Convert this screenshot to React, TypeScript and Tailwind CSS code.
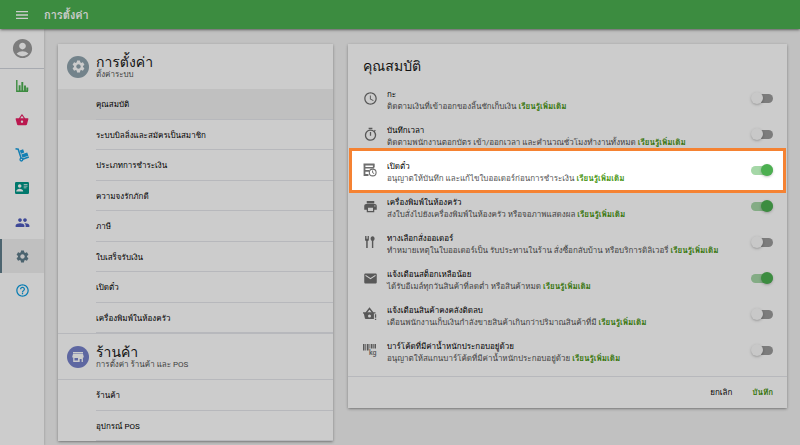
import { useState } from 'react'
import type { ReactNode } from 'react'
import clsx from 'clsx'
import {
  MdAccountCircle,
  MdAccessTime,
  MdEmail,
  MdHelpOutline,
  MdMenu,
  MdOutlineTimer,
  MdPeople,
  MdPrint,
  MdSettings,
  MdShoppingBasket,
} from 'react-icons/md'

const ChartIcon = () => (
  <svg width="14" height="14" viewBox="0 0 14 14" fill="none" stroke="currentColor">
    <path d="M1.8 1v11.2H13" strokeWidth="1.4" />
    <path d="M4.6 12V6.2M7.3 12V3M10 12V6.6M12.3 12V8.6" strokeWidth="1.9" />
  </svg>
)

const TrolleyIcon = () => (
  <svg width="15" height="15" viewBox="0 0 15 15" fill="currentColor">
    <path
      d="M.5 1.7l2.7.5 3 9.3M7.6 12.2l6.2-2.2"
      fill="none"
      stroke="currentColor"
      strokeWidth="1.5"
    />
    <path d="M4.8 3.4l3.3-1.2 1.2 3.4-3.3 1.2zM6.3 7.4l5.9-2 1.2 3.4-5.9 2z" />
    <circle cx="6.4" cy="12.6" r="1.4" fill="none" stroke="currentColor" strokeWidth="1.3" />
  </svg>
)

const CardIcon = () => (
  <svg width="14" height="12" viewBox="0 0 14 12">
    <rect width="14" height="12" rx="1.2" fill="currentColor" />
    <g fill="white">
      <circle cx="4.7" cy="4" r="1.8" />
      <path d="M1.2 9.5c0-2 2-2.8 3.5-2.8s3.5.8 3.5 2.8z" />
      <path d="M8.7 2.2h3.8v.8H8.7zM8.7 3.8h3.8v.8H8.7zM8.7 5.4h2.8v.8H8.7z" />
    </g>
  </svg>
)

const StoreIcon = () => (
  <svg width="12" height="12" viewBox="0 0 12 12" fill="currentColor">
    <path d="M1 1h10v1.4H1zM1 2.9h10l.7 2.6v1h-.8V11H9.6V8H7.7v3H1.2V6.5H.3v-1zM2.5 7v2.4H6V7z" fillRule="evenodd" />
  </svg>
)

const TicketIcon = () => (
  <svg width="14" height="14" viewBox="0 0 14 14" fill="none" stroke="currentColor">
    <path d="M.5 1.5h11M1.5 1v12M1 12h4.5M10.8 1v3.6" strokeWidth="1.8" />
    <path d="M2 4.7h9M2 7.9h4" strokeWidth="1.6" />
    <circle cx="9.7" cy="9.5" r="3.4" strokeWidth="1.1" />
    <path d="M9.6 7.5v2.2l1.6.9" />
  </svg>
)

const CutleryIcon = () => (
  <svg width="14" height="14" viewBox="0 0 14 14" fill="currentColor">
    <path d="M2 1h.9v2.7h.6V1h.9v2.7H5V1h.9v3.4c0 .9-.5 1.4-1.2 1.6V13H3.2V6C2.5 5.8 2 5.3 2 4.4z" />
    <path d="M9.6 1.2c1.2 0 2 1.1 2 2.4 0 1.2-.5 2-1.3 2.3V13H8.9V5.9c-.8-.3-1.3-1.1-1.3-2.3 0-1.3.8-2.4 2-2.4z" />
  </svg>
)

const StockAlertIcon = () => (
  <svg width="14" height="14" viewBox="0 0 14 14">
    <path d="M3 6l3.5-4.5L10 6" fill="none" stroke="currentColor" strokeWidth="1.4" />
    <path
      d="M0 5.2h12.5v1.3h-1.6V12H3.2c-.8 0-1.2-.3-1.4-1L.9 6.8 0 6.5zM6.5 7.5a1.5 1.5 0 100 3 1.5 1.5 0 000-3z"
      fill="currentColor"
      fillRule="evenodd"
    />
    <path d="M11.9 7.2h1.3v3.6h-1.3zM11.9 11.7h1.3V13h-1.3z" fill="currentColor" />
  </svg>
)

const BarcodeIcon = () => (
  <svg width="14" height="14" viewBox="0 0 14 14">
    <path
      d="M0 1h1.5v6.5H0zM2.3 1h.8v6.5h-.8zM3.9 1h1.7v6.5H3.9zM6.5 1h.8v4.5h-.8zM8 1h1.5v4.5H8zM10.2 1h.7v4.5h-.7zM11.5 1H13v4.5h-1.5z"
      fill="currentColor"
    />
    <text x="6" y="12" fontSize="7" fontWeight="500" fontFamily="Roboto, sans-serif" fill="currentColor">
      kg
    </text>
  </svg>
)

const navItems = [
  { label: 'รายงาน', icon: <ChartIcon />, color: 'text-[#4caf50]' },
  { label: 'สินค้า', icon: <MdShoppingBasket size={14} />, color: 'text-[#e91e63]' },
  { label: 'คลังสินค้า', icon: <TrolleyIcon />, color: 'text-[#1a9fe0]' },
  { label: 'พนักงาน', icon: <CardIcon />, color: 'text-[#009688]' },
  { label: 'ลูกค้า', icon: <MdPeople size={15} />, color: 'text-[#4e5bbd]' },
  { label: 'การตั้งค่า', icon: <MdSettings size={15} />, color: 'text-[#607d8b]', active: true },
  { label: 'ช่วยเหลือ', icon: <MdHelpOutline size={15} />, color: 'text-[#0c9de0]' },
]

const systemItems = [
  'คุณสมบัติ',
  'ระบบบิลลิ่งและสมัครเป็นสมาชิก',
  'ประเภทการชำระเงิน',
  'ความจงรักภักดี',
  'ภาษี',
  'ใบเสร็จรับเงิน',
  'เปิดตั๋ว',
  'เครื่องพิมพ์ในห้องครัว',
]

const storeItems = ['ร้านค้า', 'อุปกรณ์ POS']

type Feature = {
  id: string
  icon: ReactNode
  title: string
  text: string
  on?: boolean
  highlight?: boolean
}

const features: Feature[] = [
  { id: 'shifts', icon: <MdAccessTime size={15} />, title: 'กะ', text: 'ติดตามเงินที่เข้าออกของลิ้นชักเก็บเงิน' },
  {
    id: 'clock',
    icon: <MdOutlineTimer size={15} />,
    title: 'บันทึกเวลา',
    text: 'ติดตามพนักงานตอกบัตร เข้า/ออกเวลา และคำนวณชั่วโมงทำงานทั้งหมด',
  },
  {
    id: 'tickets',
    icon: <TicketIcon />,
    title: 'เปิดตั๋ว',
    text: 'อนุญาตให้บันทึก และแก้ไขใบออเดอร์ก่อนการชำระเงิน',
    on: true,
    highlight: true,
  },
  {
    id: 'printers',
    icon: <MdPrint size={15} />,
    title: 'เครื่องพิมพ์ในห้องครัว',
    text: 'ส่งใบสั่งไปยังเครื่องพิมพ์ในห้องครัว หรือจอภาพแสดงผล',
    on: true,
  },
  {
    id: 'dining',
    icon: <CutleryIcon />,
    title: 'ทางเลือกสั่งออเดอร์',
    text: 'ทำหมายเหตุในใบออเดอร์เป็น รับประทานในร้าน สั่งซื้อกลับบ้าน หรือบริการดิลิเวอรี่',
  },
  {
    id: 'stock',
    icon: <MdEmail size={15} />,
    title: 'แจ้งเตือนสต็อกเหลือน้อย',
    text: 'ได้รับอีเมล์ทุกวันสินค้าที่ลดต่ำ หรือสินค้าหมด',
    on: true,
  },
  {
    id: 'negative',
    icon: <StockAlertIcon />,
    title: 'แจ้งเตือนสินค้าคงคลังติดลบ',
    text: 'เตือนพนักงานเก็บเงินกำลังขายสินค้าเกินกว่าปริมาณสินค้าที่มี',
  },
  {
    id: 'barcodes',
    icon: <BarcodeIcon />,
    title: 'บาร์โค้ดที่มีค่าน้ำหนักประกอบอยู่ด้วย',
    text: 'อนุญาตให้สแกนบาร์โค้ดที่มีค่าน้ำหนักประกอบอยู่ด้วย',
  },
]

function Switch({ id, defaultChecked }: { id: string; defaultChecked?: boolean }) {
  const [checked, setChecked] = useState(!!defaultChecked)
  return (
    <span className="relative flex h-3 w-[22px] shrink-0 items-center">
      <input
        id={id}
        type="checkbox"
        role="switch"
        checked={checked}
        onChange={(e) => setChecked(e.target.checked)}
        className="peer absolute inset-0 z-10 cursor-pointer opacity-0"
      />
      <span className="ml-1 h-[9px] flex-1 rounded-full bg-[#9b9b9b] peer-checked:ml-0 peer-checked:bg-[#a5d7a7]" />
      <span className="absolute left-0 size-3 rounded-full bg-[#fafafa] shadow-sm shadow-black/20 peer-checked:right-0 peer-checked:left-auto peer-checked:bg-[#4caf50]" />
    </span>
  )
}

function SectionHeader({ icon, color, title, text }: { icon: ReactNode; color: string; title: string; text: string }) {
  return (
    <div className="flex h-[45px] items-center gap-[7px] pl-[9px]">
      <div className={clsx('flex size-[22px] items-center justify-center rounded-full text-white', color)}>{icon}</div>
      <div className="flex flex-col">
        <h2 className="text-sm leading-4 text-neutral-900">{title}</h2>
        <p className="text-[8px] leading-[10px] text-neutral-600">{text}</p>
      </div>
    </div>
  )
}

function SettingsList({ items, active }: { items: string[]; active?: string }) {
  return (
    <ul className="flex flex-col">
      {items.map((item) => (
        <li key={item} className={clsx('pl-[38px] odd:h-[31px] even:h-[30px]', item === active && 'bg-[#f0f0f0]')}>
          <a href="#" className="flex h-full items-center border-b border-gray-200 pt-0.5 text-[8px] text-black">
            {item}
          </a>
        </li>
      ))}
    </ul>
  )
}

function FeatureRow({ feature }: { feature: Feature }) {
  return (
    <li className={clsx('relative flex h-9 items-center pr-[14px] pl-[15px]', feature.highlight && 'z-20')}>
      {feature.highlight && (
        <div className="absolute inset-x-px -top-1 -bottom-[5px] border-[3px] border-[#f58232] bg-white" />
      )}
      <div className="relative flex w-6 shrink-0 text-[#6e6e6e]">{feature.icon}</div>
      <div className="relative min-w-0 flex-1 pt-1.5 text-[8px] leading-3 whitespace-nowrap">
        <label htmlFor={feature.id} className="block text-black">
          {feature.title}
        </label>
        <p className="text-neutral-600">
          {feature.text}{' '}
          <a href="#" className="font-semibold text-[#43920a]">
            เรียนรู้เพิ่มเติม
          </a>
        </p>
      </div>
      <Switch id={feature.id} defaultChecked={feature.on} />
    </li>
  )
}

function App() {
  return (
    <div className="relative flex min-h-screen flex-col bg-[#f2f2f2] font-['Roboto','Loma','Waree','Garuda',sans-serif]">
      <header className="relative flex h-[29px] items-center gap-[14px] bg-[#4caf50] pl-[14px] text-white shadow shadow-black/40">
        <button type="button" aria-label="เมนู">
          <MdMenu size={16} />
        </button>
        <h1 className="pt-1 text-[11px] font-bold">การตั้งค่า</h1>
      </header>

      <div className="flex flex-1">
        <nav className="w-11 shrink-0 bg-white shadow shadow-black/20">
          <a href="#" aria-label="บัญชี" className="flex h-10 items-center justify-center border-b border-gray-300 text-[#9c9c9c]">
            <MdAccountCircle size={23} />
          </a>
          {navItems.map((item) => (
            <a
              key={item.label}
              href="#"
              aria-label={item.label}
              className={clsx(
                'flex h-[34px] items-center border-l-2 pl-[13px]',
                item.color,
                item.active ? 'border-[#607d8b] bg-[#f0f0f0]' : 'border-transparent',
              )}
            >
              {item.icon}
            </a>
          ))}
        </nav>

        <main className="flex min-w-0 flex-1 items-start gap-[15px] pt-[15px] pr-[13px] pb-1 pl-[14px]">
          <section className="w-[275px] shrink-0 bg-white shadow shadow-black/30">
            <SectionHeader icon={<MdSettings size={15} />} color="bg-[#90a4ae]" title="การตั้งค่า" text="ตั้งค่าระบบ" />
            <SettingsList items={systemItems} active="คุณสมบัติ" />
            <div className="border-y border-gray-200">
              <SectionHeader icon={<StoreIcon />} color="bg-[#7681ca]" title="ร้านค้า" text="การตั้งค่า ร้านค้า และ POS" />
            </div>
            <SettingsList items={storeItems} />
          </section>

          <section className="min-w-0 flex-1 bg-white shadow shadow-black/30">
            <h2 className="px-[15px] pt-3 pb-1 text-sm leading-5 text-neutral-900">คุณสมบัติ</h2>
            <ul className="pb-2">
              {features.map((feature) => (
                <FeatureRow key={feature.id} feature={feature} />
              ))}
            </ul>
            <div className="flex h-8 items-center justify-end gap-5 border-t border-gray-200 px-[14px] text-[8px]">
              <button type="button" className="text-black">
                ยกเลิก
              </button>
              <button type="button" className="font-semibold text-[#43920a]">
                บันทึก
              </button>
            </div>
          </section>
        </main>
      </div>

      <div className="pointer-events-none absolute inset-0 z-10 bg-black/20" />
    </div>
  )
}

export default App
